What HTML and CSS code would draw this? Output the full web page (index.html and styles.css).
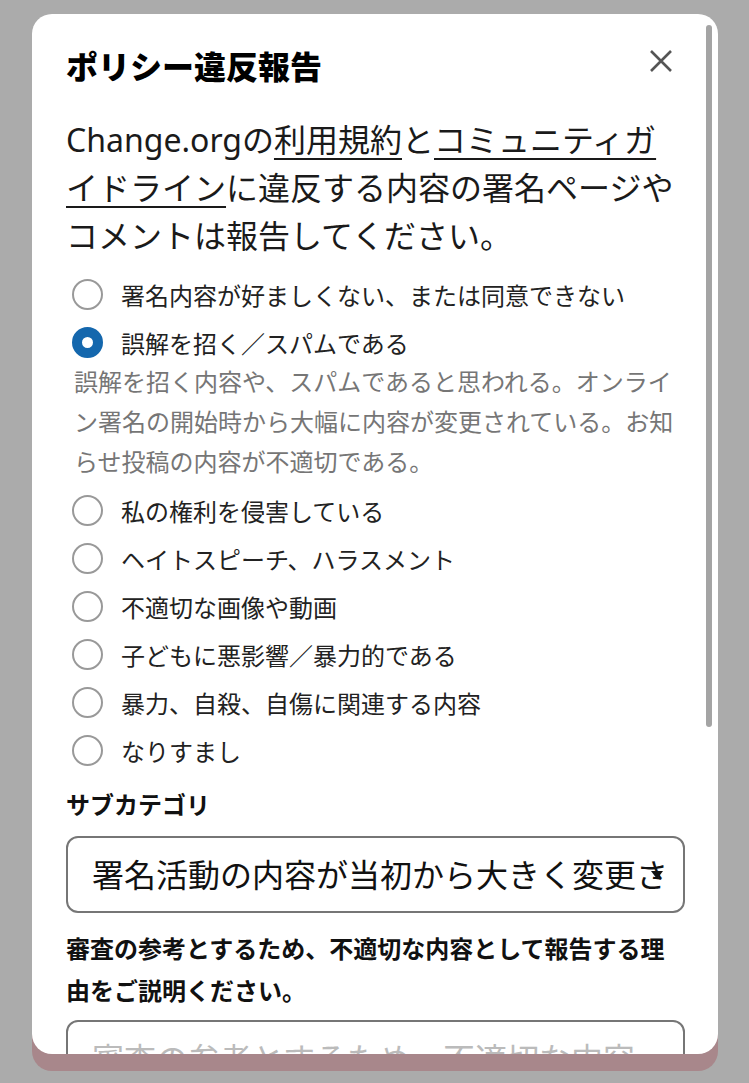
FILE: index.html
```html
<!DOCTYPE html>
<html lang="ja">
<head>
    <meta charset="UTF-8">
    <meta name="viewport" content="width=device-width, initial-scale=1.0">
    <title>ポリシー違反報告</title>
    <link rel="stylesheet" href="styles.css">
</head>
<body>
    <div class="page">
        <div class="dialog">
            <div class="dialog-card">
                <div class="scrollbar"></div>

                <!-- Header -->
                <div class="dialog-header">
                    <h2>ポリシー違反報告</h2>
                    <button class="close-btn" type="button" aria-label="閉じる">
                        <svg width="24" height="24" viewBox="0 0 24 24">
                            <path d="M2 2 L22 22 M22 2 L2 22" stroke="#555" stroke-width="2.6" fill="none"/>
                        </svg>
                    </button>
                </div>

                <p class="intro">Change.orgの<a href="#">利用規約</a>と<a href="#">コミュニティガイドライン</a>に違反する内容の署名ページやコメントは報告してください。</p>

                <!-- Reasons -->
                <div class="options">
                    <label class="option"><span class="radio"></span>署名内容が好ましくない、または同意できない</label>
                    <label class="option"><span class="radio checked"></span>誤解を招く／スパムである</label>
                    <p class="option-desc">誤解を招く内容や、スパムであると思われる。オンライン署名の開始時から大幅に内容が変更されている。お知らせ投稿の内容が不適切である。</p>
                    <label class="option"><span class="radio"></span>私の権利を侵害している</label>
                    <label class="option"><span class="radio"></span>ヘイトスピーチ、ハラスメント</label>
                    <label class="option"><span class="radio"></span>不適切な画像や動画</label>
                    <label class="option"><span class="radio"></span>子どもに悪影響／暴力的である</label>
                    <label class="option"><span class="radio"></span>暴力、自殺、自傷に関連する内容</label>
                    <label class="option"><span class="radio"></span>なりすまし</label>
                </div>

                <!-- Subcategory -->
                <div class="field-label">サブカテゴリ</div>
                <div class="select-box">
                    <span class="select-value">署名活動の内容が当初から大きく変更さ</span>
                </div>

                <div class="field-label multi">審査の参考とするため、不適切な内容として報告する理由をご説明ください。</div>
                <textarea class="reason" placeholder="審査の参考とするため、不適切な内容"></textarea>
            </div>
            <div class="dialog-edge"></div>
        </div>
    </div>
</body>
</html>
```

FILE: styles.css
```css
* {
    margin: 0;
    padding: 0;
    box-sizing: border-box;
}

body {
    font-family: "Noto Sans", "Noto Sans CJK JP", sans-serif;
    background: #ababab;
    color: #1a1a1a;
}

.page {
    padding: 14px 31px 0 32px;
}

.dialog {
    width: 686px;
}

.dialog-card {
    position: relative;
    z-index: 1;
    height: 1040px;
    overflow: hidden;
    padding: 32px 33px 0 34px;
    background: #fff;
    border-radius: 20px;
}

.dialog-edge {
    height: 57px;
    margin-top: -40px;
    background: #a8878b;
    border-radius: 0 0 20px 20px;
}

.scrollbar {
    position: absolute;
    top: 11px;
    right: 6px;
    width: 6px;
    height: 702px;
    background: #a4a4a4;
    border-radius: 3px;
}

.dialog-header {
    display: flex;
    justify-content: space-between;
    align-items: flex-start;
}

h2 {
    font-size: 32px;
    font-weight: 900;
    line-height: 42px;
    color: #000;
}

.close-btn {
    width: 24px;
    height: 24px;
    margin: 3px 12px 0 0;
    background: none;
    border: none;
    cursor: pointer;
}

.close-btn svg {
    display: block;
}

.intro {
    margin-top: 28px;
    font-size: 32px;
    line-height: 48px;
}

.intro a {
    color: inherit;
    text-decoration: underline;
    text-decoration-thickness: 2px;
    text-underline-offset: 6px;
}

.options {
    margin-top: 10px;
}

.option {
    display: flex;
    align-items: center;
    gap: 18px;
    height: 48px;
    padding-left: 6px;
    font-size: 24px;
    color: #222;
}

.radio {
    flex: none;
    width: 31px;
    height: 31px;
    border: 2.7px solid #999;
    border-radius: 50%;
    background: #fff;
}

.radio.checked {
    border: 10px solid #1467ad;
}

.option-desc {
    margin: -4px 0 4px 8px;
    font-size: 24px;
    line-height: 40px;
    color: #767676;
}

.field-label {
    margin-top: 15px;
    font-size: 24px;
    font-weight: 700;
    line-height: 32px;
    color: #111;
}

.field-label.multi {
    line-height: 42px;
}

.select-box {
    position: relative;
    height: 77px;
    margin-top: 15px;
    padding: 0 16px 0 24px;
    border: 2px solid #767676;
    border-radius: 12px;
    color: #111;
}

.select-value {
    display: block;
    font-size: 32px;
    line-height: 73px;
    white-space: nowrap;
    overflow: hidden;
}

.select-box::after {
    content: "";
    position: absolute;
    top: 33px;
    right: 20px;
    border-left: 6px solid transparent;
    border-right: 6px solid transparent;
    border-top: 8px solid #111;
}

.reason {
    display: block;
    width: 100%;
    height: 160px;
    margin-top: 8px;
    padding: 13px 24px;
    border: 2px solid #767676;
    border-radius: 12px;
    font-family: "Noto Sans", "Noto Sans CJK JP", sans-serif;
    font-size: 32px;
    line-height: 48px;
    resize: none;
}

.reason::placeholder {
    color: #bbb;
}
```
